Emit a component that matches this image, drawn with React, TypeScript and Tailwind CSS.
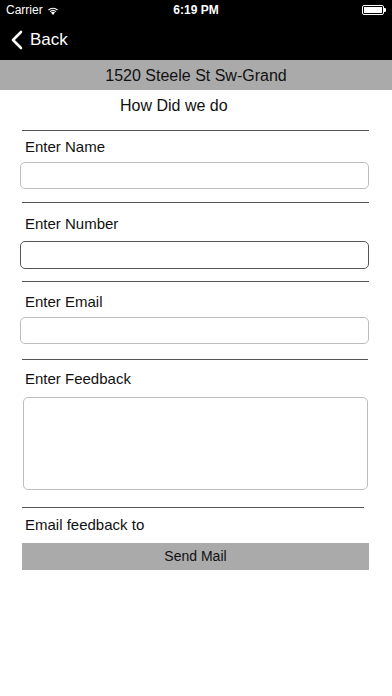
// Feedback form screen: status bar, nav bar, location band, form sections.
const font = { fontFamily: '"Liberation Sans", Arial, sans-serif' };

function Rule({ className = "" }: { className?: string }) {
  return <div className={`h-px bg-[#555] ${className}`} />;
}

function Label({ text, className = "" }: { text: string; className?: string }) {
  return (
    <div className={`h-[18px] leading-[18px] pl-[25px] text-[15px] text-[#111] ${className}`}>
      {text}
    </div>
  );
}

export default function App() {
  return (
    <div className="w-[392px] h-[696px] bg-white overflow-hidden" style={font}>
      {/* status bar */}
      <div className="h-[20px] bg-black text-white flex items-center justify-between px-[6px] relative">
        <div className="flex items-center gap-[4px] text-[12px]">
          <span>Carrier</span>
          <svg width="12" height="10" viewBox="0 0 11 9" fill="white">
            <path d="M5.5 9 L3.6 6.9 A2.8 2.8 0 0 1 7.4 6.9 Z" />
            <path d="M2.4 5.6 A4.6 4.6 0 0 1 8.6 5.6 L7.9 6.4 A3.6 3.6 0 0 0 3.1 6.4 Z" />
            <path d="M1 4.1 A6.6 6.6 0 0 1 10 4.1 L9.3 4.9 A5.6 5.6 0 0 0 1.7 4.9 Z" />
          </svg>
        </div>
        <div className="absolute left-0 right-0 text-center text-[12px] font-bold pointer-events-none">
          6:19 PM
        </div>
        <div className="flex items-center">
          <div className="w-[22px] h-[10px] border border-white rounded-[2px] p-[1px]">
            <div className="w-full h-full bg-white" />
          </div>
          <div className="w-[2px] h-[4px] bg-white rounded-r-[1px]" />
        </div>
      </div>

      {/* nav bar */}
      <div className="h-[40px] bg-black text-white flex items-center pl-[11px]">
        <svg width="12" height="20" viewBox="0 0 12 20" fill="none" stroke="white" strokeWidth="2.6" strokeLinecap="round" strokeLinejoin="round">
          <path d="M10 2 L2 10 L10 18" />
        </svg>
        <span className="ml-[7px] text-[17px]">Back</span>
      </div>

      {/* location band */}
      <div className="h-[30px] bg-[#aaaaaa] flex items-center justify-center pt-[2px] text-[16px] text-[#111]">
        1520 Steele St Sw-Grand
      </div>

      <div className="h-[32px] flex items-center pl-[120px] text-[16px] text-[#111]">How Did we do</div>

      <div className="pl-[22px] pr-[23px]">
        <Rule className="mt-[8px]" />
      </div>

      <Label text="Enter Name" className="mt-[7px]" />
      <div className="px-[20px] pr-[23px] mt-[6px]">
        <div className="h-[27px] border border-[#bdbdbd] rounded-[5px]" />
      </div>
      <div className="pl-[22px] pr-[23px]">
        <Rule className="mt-[13px]" />
      </div>

      <Label text="Enter Number" className="mt-[12px]" />
      <div className="px-[20px] pr-[23px] mt-[8px]">
        <div className="h-[28px] border border-[#555] rounded-[5px]" />
      </div>
      <div className="pl-[22px] pr-[23px]">
        <Rule className="mt-[12px]" />
      </div>

      <Label text="Enter Email" className="mt-[11px]" />
      <div className="px-[20px] pr-[23px] mt-[6px]">
        <div className="h-[27px] border border-[#bdbdbd] rounded-[5px]" />
      </div>
      <div className="pl-[22px] pr-[24px]">
        <Rule className="mt-[15px]" />
      </div>

      <Label text="Enter Feedback" className="mt-[10px]" />
      <div className="pl-[23px] pr-[24px] mt-[9px]">
        <div className="h-[93px] border border-[#bdbdbd] rounded-[5px]" />
      </div>
      <div className="pl-[22px] pr-[28px]">
        <Rule className="mt-[17px]" />
      </div>

      <Label text="Email feedback to" className="mt-[8px]" />
      <div className="pl-[22px] pr-[23px] mt-[9px]">
        <button
          type="button"
          className="w-full h-[27px] bg-[#aaaaaa] text-[14px] text-[#111] flex items-center justify-center"
        >
          Send Mail
        </button>
      </div>
    </div>
  );
}
